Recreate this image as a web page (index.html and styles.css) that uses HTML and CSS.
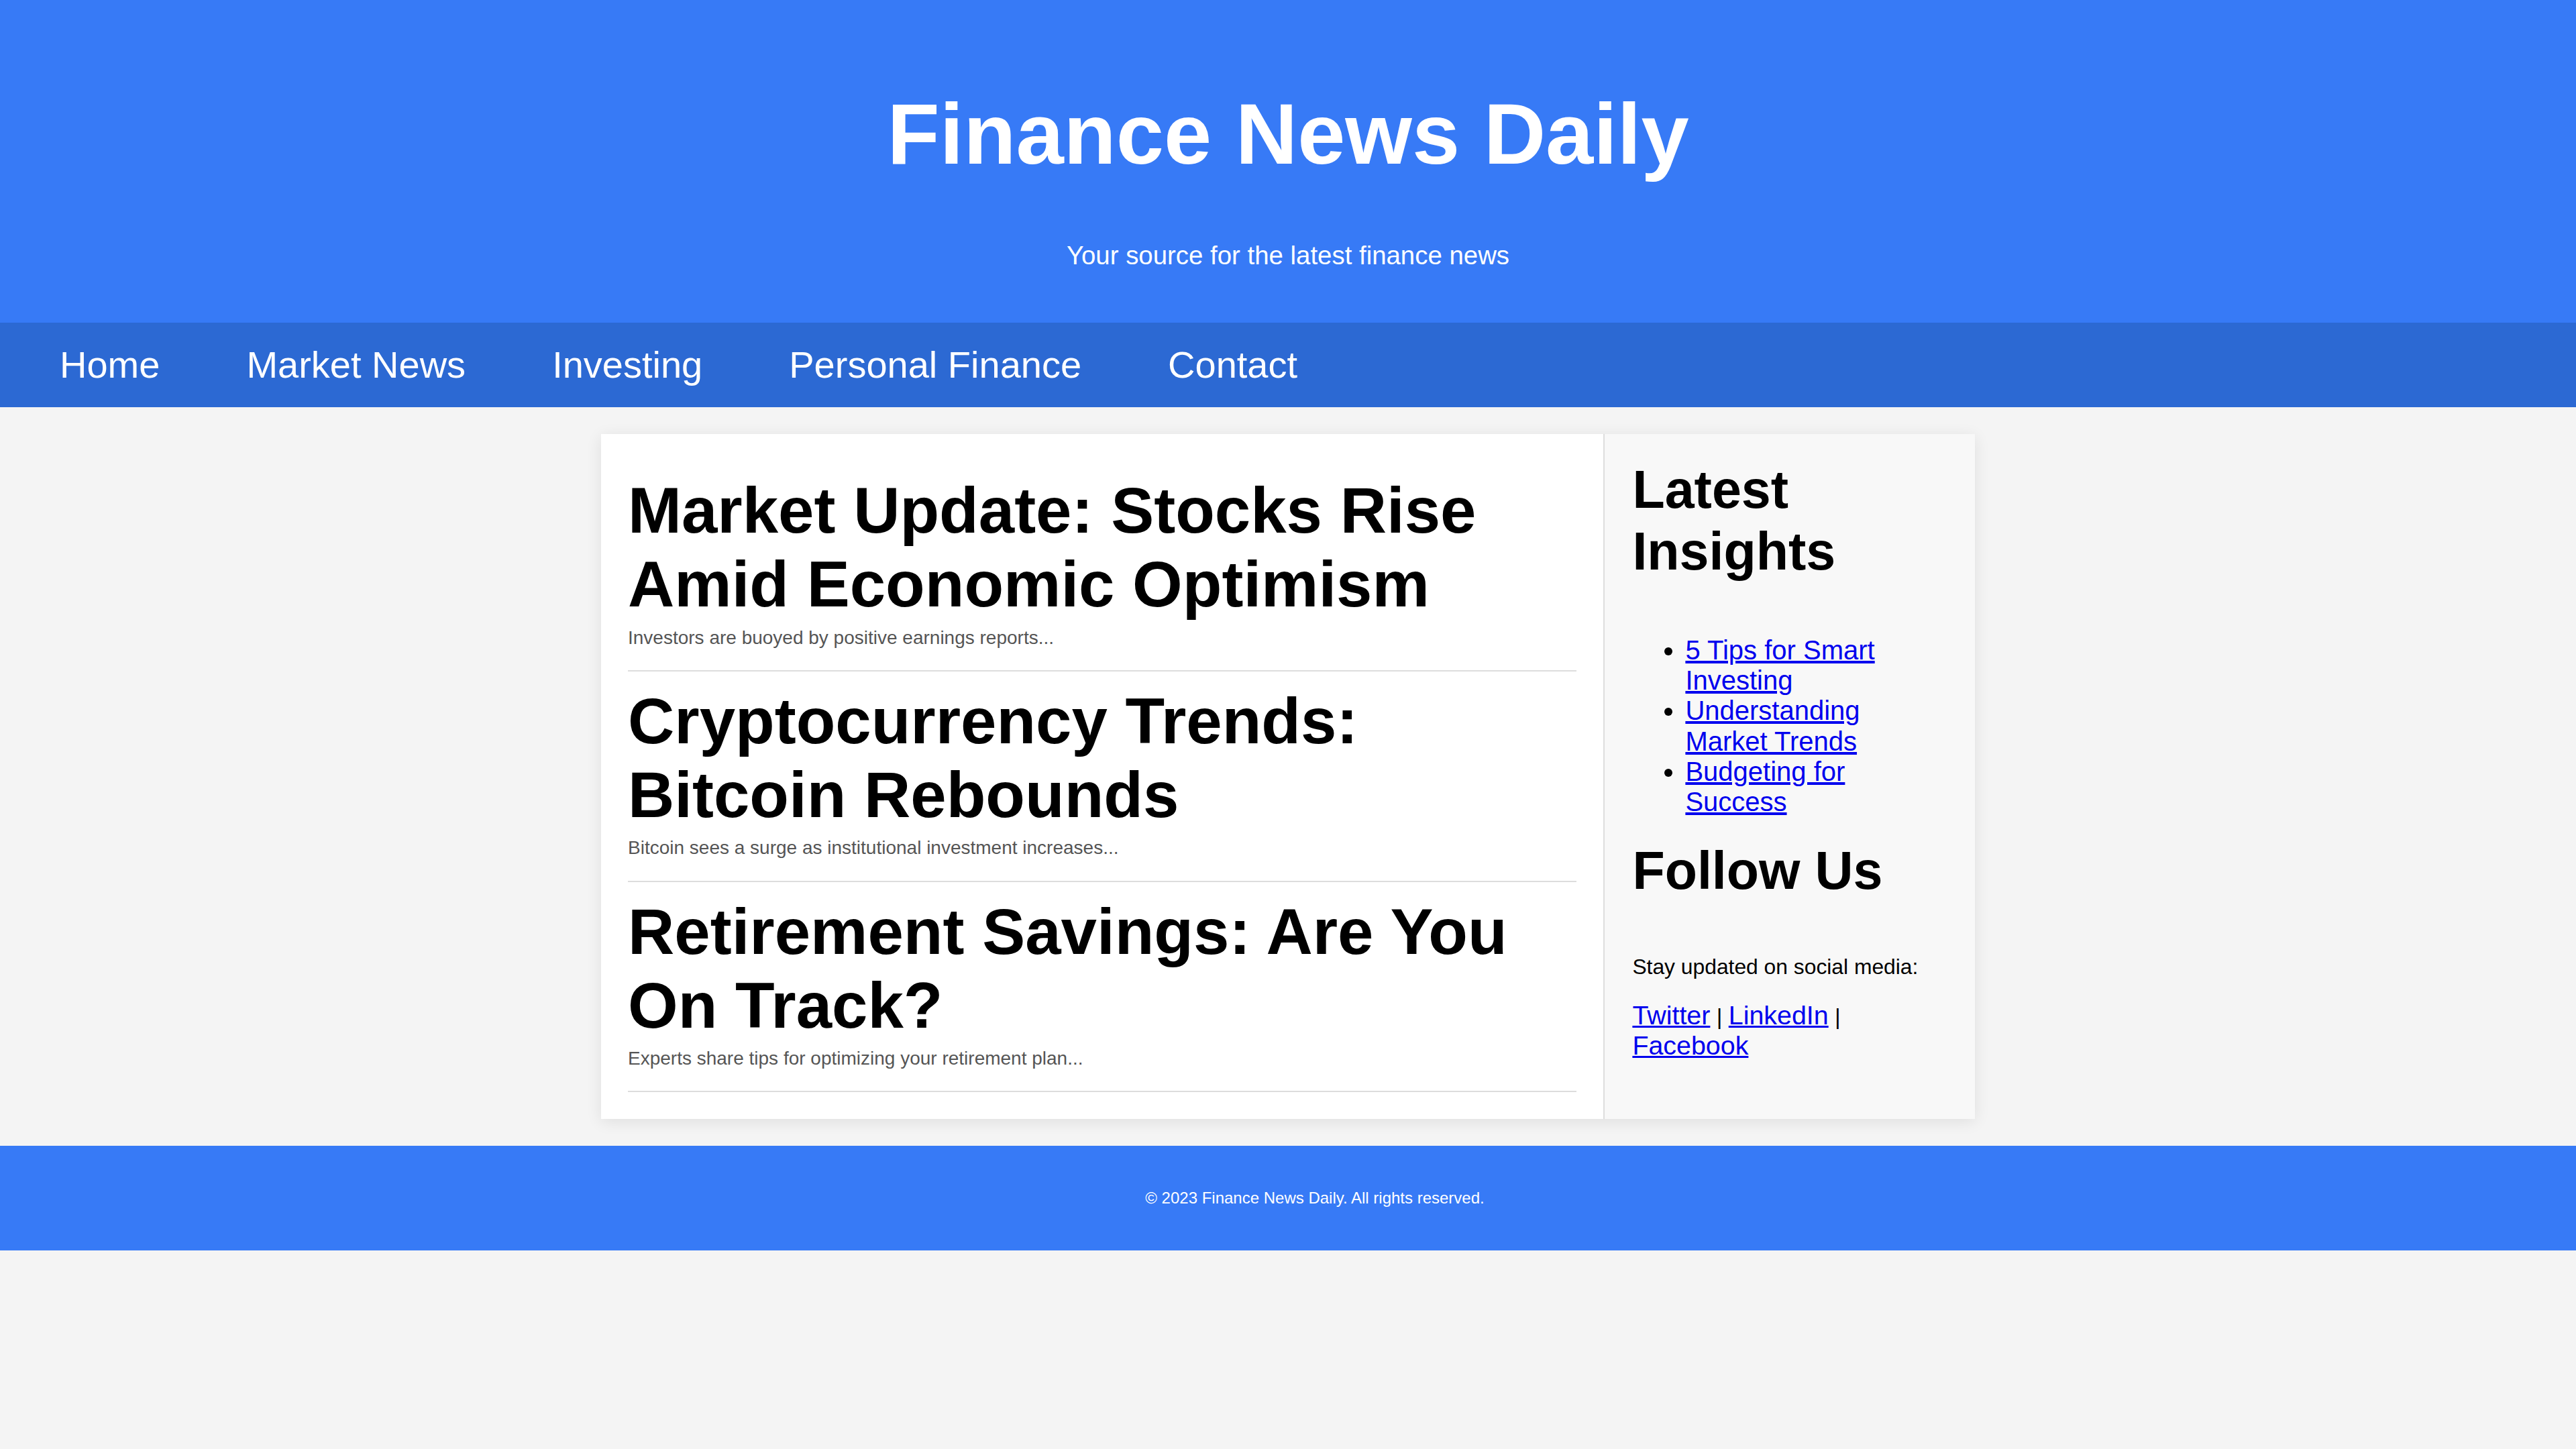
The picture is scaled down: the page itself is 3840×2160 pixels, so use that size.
FILE: index.html
```html
<!DOCTYPE html>
<html lang="en">
<head>
<meta charset="utf-8">
<title>Finance News Daily</title>
<link rel="stylesheet" href="styles.css">
</head>
<body>
<header class="site-header">
  <h1 class="site-title">Finance News Daily</h1>
  <p class="site-tagline">Your source for the latest finance news</p>
</header>
<nav class="site-nav">
  <a href="#" class="nav-link">Home</a>
  <a href="#" class="nav-link">Market News</a>
  <a href="#" class="nav-link">Investing</a>
  <a href="#" class="nav-link">Personal Finance</a>
  <a href="#" class="nav-link">Contact</a>
</nav>
<main class="page-main">
  <div class="content-card">
    <section class="articles">
      <article class="article">
        <h2 class="article-title">Market Update: Stocks Rise Amid Economic Optimism</h2>
        <p class="article-summary">Investors are buoyed by positive earnings reports...</p>
      </article>
      <article class="article">
        <h2 class="article-title">Cryptocurrency Trends: Bitcoin Rebounds</h2>
        <p class="article-summary">Bitcoin sees a surge as institutional investment increases...</p>
      </article>
      <article class="article">
        <h2 class="article-title">Retirement Savings: Are You On Track?</h2>
        <p class="article-summary">Experts share tips for optimizing your retirement plan...</p>
      </article>
    </section>
    <aside class="sidebar">
      <h2 class="side-title">Latest Insights</h2>
      <ul class="insight-list">
        <li><a href="#">5 Tips for Smart Investing</a></li>
        <li><a href="#">Understanding Market Trends</a></li>
        <li><a href="#">Budgeting for Success</a></li>
      </ul>
      <h2 class="side-title">Follow Us</h2>
      <p class="side-text">Stay updated on social media:</p>
      <p class="social"><a href="#">Twitter</a> | <a href="#">LinkedIn</a> | <a href="#">Facebook</a></p>
    </aside>
  </div>
</main>
<footer class="site-footer">
  <p class="footer-text">&copy; 2023 Finance News Daily. All rights reserved.</p>
</footer>
</body>
</html>
```

FILE: styles.css
```css
* { box-sizing: border-box; }

html, body {
  margin: 0;
  padding: 0;
}

body {
  background: #f4f4f4;
  font-family: "Liberation Sans", Arial, Helvetica, sans-serif;
  color: #000;
  min-height: 2160px;
}

.site-header {
  background: #377af6;
  color: #fff;
  text-align: center;
  padding: 40px 0;
}

.site-title {
  font-size: 128px;
  font-weight: bold;
  line-height: normal;
  margin: 85.8px 0;
}

.site-tagline {
  font-size: 38.4px;
  line-height: normal;
  margin: 38.4px 0;
}

.site-nav {
  background: #2c69d3;
  height: 126px;
  display: flex;
  align-items: center;
  gap: 129px;
  padding-left: 89px;
}

.nav-link {
  color: #fff;
  text-decoration: none;
  font-size: 56px;
  line-height: normal;
}

.page-main {
  padding: 40px 0;
}

.content-card {
  width: 2048px;
  margin: 0 auto;
  display: grid;
  grid-template-columns: 1494px 554px;
  background: #fff;
  box-shadow: 0 4px 22px rgba(0, 0, 0, 0.09);
}

.articles {
  padding: 40px;
}

.article {
  padding: 19.2px 0 32.2px;
  border-bottom: 2.2px solid #dddddd;
}

.article-title {
  font-size: 96px;
  font-weight: bold;
  line-height: normal;
  margin: 0 0 8.4px;
}

.article-summary {
  font-size: 28px;
  line-height: normal;
  color: #555;
  margin: 0;
}

.sidebar {
  background: #f8f8f8;
  border-left: 2.4px solid #dddddd;
  padding: 37px 42px 40px 41.4px;
}

.side-title {
  font-size: 79px;
  font-weight: bold;
  line-height: normal;
  margin: 0 0 79px;
}

.insight-list {
  margin: 0 0 34px;
  padding: 0 4px 0 79px;
  font-size: 40px;
  line-height: 45.2px;
}

.insight-list a,
.social a {
  color: #0000ee;
  text-decoration: underline;
}

.side-text {
  font-size: 31.8px;
  line-height: normal;
  margin: 0 0 31px;
}

.social {
  font-size: 33.5px;
  line-height: normal;
  margin: 0;
}

.social a {
  font-size: 39.4px;
}

.site-footer {
  background: #377af6;
  color: #fff;
  text-align: center;
  padding: 40px 0 40px 80px;
}

.footer-text {
  font-size: 24px;
  line-height: normal;
  margin: 24px 0;
}
```
